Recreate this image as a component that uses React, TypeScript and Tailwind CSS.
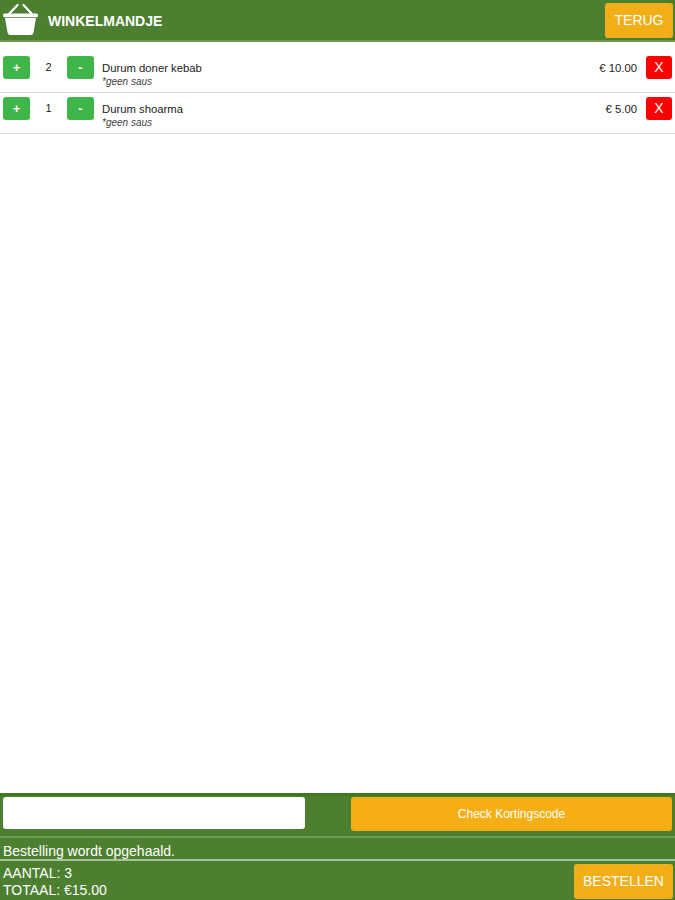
const items = [
  { qty: 2, name: "Durum doner kebab", price: "€ 10.00" },
  { qty: 1, name: "Durum shoarma", price: "€ 5.00" },
];

function Basket() {
  return (
    <svg width="36" height="34" viewBox="0 0 36 34" fill="white">
      <path d="M6 11 L14.5 2 M29 11 L20.5 2" stroke="white" strokeWidth="2.2" strokeLinecap="round" fill="none" />
      <rect x="0" y="10.5" width="35" height="3.8" rx="1.5" />
      <path d="M2 15 H33 L30.5 29.5 Q30.1 32 27.5 32 H7.5 Q4.9 32 4.5 29.5 Z" />
    </svg>
  );
}

function Row({ qty, name, price }: { qty: number; name: string; price: string }) {
  return (
    <div className="flex h-[41px] items-start border-b border-[#dedede] pl-[3px] pr-[3px] pt-[4px] first:h-[45px] first:pt-[8px]">
      <button className="h-[23px] w-[27px] rounded-[3px] bg-[#3fb54a] text-[13px] font-bold leading-[23px] text-white">+</button>
      <div className="w-[37px] text-center text-[11px] leading-[23px] text-[#222]">{qty}</div>
      <button className="h-[23px] w-[27px] rounded-[3px] bg-[#3fb54a] text-[13px] font-bold leading-[23px] text-white">-</button>
      <div className="ml-[8px] flex-1 pt-[5px]">
        <div className="text-[11.3px] leading-[14px] text-[#222]">{name}</div>
        <div className="text-[10px] italic leading-[13px] text-[#444]">*geen saus</div>
      </div>
      <div className="text-[11.3px] leading-[25px] text-[#222]">{price}</div>
      <button className="ml-[9px] h-[23px] w-[26px] rounded-[3px] bg-[#fe0000] text-[14px] leading-[23px] text-white">X</button>
    </div>
  );
}

export default function App() {
  return (
    <div className="flex h-[900px] w-[675px] flex-col bg-white font-['Liberation_Sans',Arial,sans-serif]">
      <header className="flex h-[42px] items-center border-b-2 border-[#6b9a4e] bg-[#4d7f31] pl-[3px] pr-[2px]">
        <Basket />
        <h1 className="ml-[9px] flex-1 pt-[3px] text-[14px] font-bold text-white">WINKELMANDJE</h1>
        <button className="mt-[1px] h-[35px] w-[68px] rounded-[3px] bg-[#f2ae17] text-[14px] text-white">TERUG</button>
      </header>

      <div className="flex-1 pt-[6px]">
        {items.map((item) => (
          <Row key={item.name} {...item} />
        ))}
      </div>

      <footer className="bg-[#4d7f31] text-white">
        <div className="flex h-[43px] items-start border-t-[3px] border-[#3f7a1c] px-[3px] pt-[1px]">
          <input className="h-[32px] w-[302px] rounded-[3px] bg-white" />
          <button className="ml-[46px] h-[34px] flex-1 rounded-[3px] bg-[#f5af15] text-[12px] text-white">Check Kortingscode</button>
        </div>
        <div className="h-[23px] border-t-2 border-[#6f9a57] pl-[3px] text-[14px] leading-[27px]">Bestelling wordt opgehaald.</div>
        <div className="flex h-[41px] items-start border-t-2 border-[#a9c49a] pl-[3px] pr-[2px] pt-[3px]">
          <div className="flex-1 pt-[1px] text-[14px] leading-[17px]">
            <div>AANTAL: 3</div>
            <div>TOTAAL: €15.00</div>
          </div>
          <button className="h-[35px] w-[99px] rounded-[3px] bg-[#f2ae17] text-[14px] text-white">BESTELLEN</button>
        </div>
      </footer>
    </div>
  );
}
